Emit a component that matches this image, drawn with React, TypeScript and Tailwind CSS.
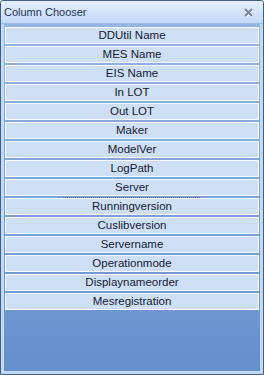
import React from 'react';

const columns = [
  'DDUtil Name',
  'MES Name',
  'EIS Name',
  'In LOT',
  'Out LOT',
  'Maker',
  'ModelVer',
  'LogPath',
  'Server',
  'Runningversion',
  'Cuslibversion',
  'Servername',
  'Operationmode',
  'Displaynameorder',
  'Mesregistration',
];

export default function App() {
  return (
    <div
      className="w-[264px] h-[375px] flex flex-col bg-[#c3d9f6] border border-[#3e5e8c] rounded-t-[3px] overflow-hidden"
      style={{ fontFamily: '"Liberation Sans", Arial, sans-serif' }}
    >
      {/* title bar */}
      <div className="h-[23px] shrink-0 flex items-center justify-between pl-[3px] pr-[10px] bg-gradient-to-b from-[#e4effd] to-[#c5dafa] border-b border-[#a3bfe6]">
        <span className="text-[11px] text-[#1c3458]">Column Chooser</span>
        <svg width="9" height="9" viewBox="0 0 9 9" className="mt-[1px]">
          <path d="M1 1 L8 8 M8 1 L1 8" stroke="#f2f6fc" strokeWidth="3" transform="translate(0.5 0.5)" />
          <path d="M1 1 L8 8 M8 1 L1 8" stroke="#72839c" strokeWidth="1.8" />
        </svg>
      </div>

      {/* list */}
      <div className="flex-1 mx-[3px] mb-[3px] pt-[3px] px-[1px] flex flex-col bg-gradient-to-b from-[#93b5e6] to-[#6690cd]">
        {columns.map(name => (
          <React.Fragment key={name}>
            <div className="h-[17px] shrink-0 flex items-center justify-center bg-[#cfe0f6] border border-white text-[11.5px] text-[#141a33] leading-none">
              {name}
            </div>
            <div className="h-[2px] shrink-0 flex items-center">
              {name === 'Server' && <div className="ml-[58px] w-[137px] border-t border-dotted border-[#3a4058] opacity-70" />}
            </div>
          </React.Fragment>
        ))}
      </div>
    </div>
  );
}
